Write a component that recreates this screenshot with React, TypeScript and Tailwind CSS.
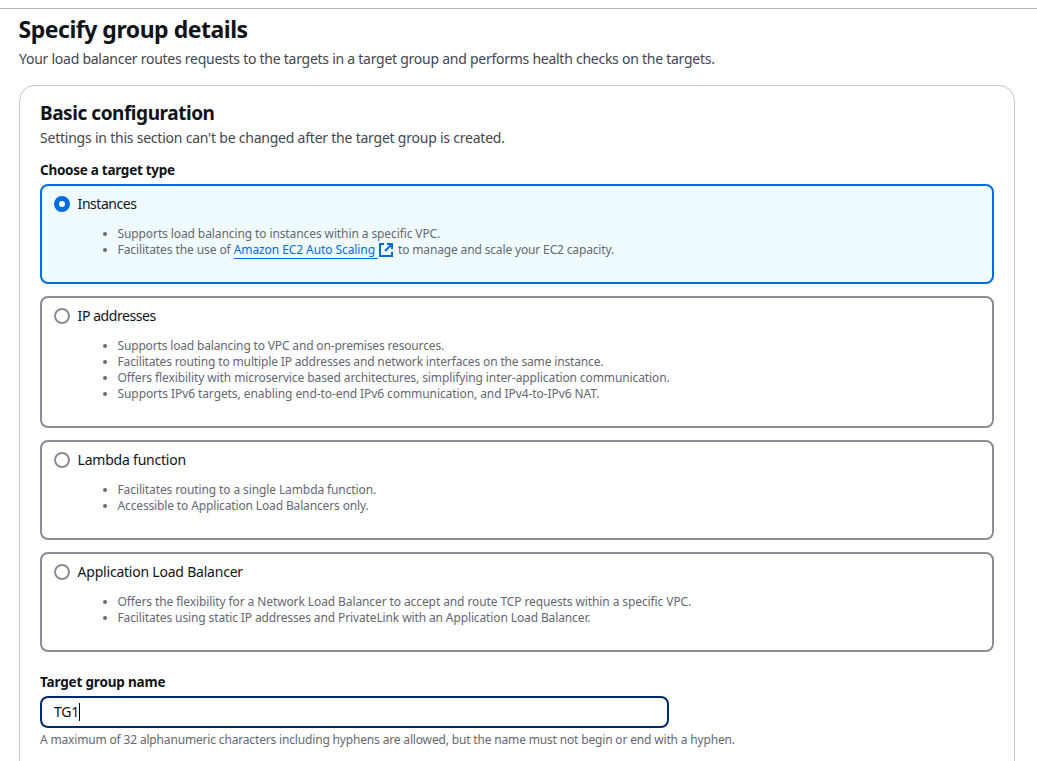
import React from "react";

function Radio({ checked }: { checked?: boolean }) {
  return (
    <span
      className={
        "mt-0.5 h-4 w-4 shrink-0 rounded-full bg-white " +
        (checked ? "border-[5px] border-[#006ce0]" : "border-2 border-[#8c8c94]")
      }
    />
  );
}

type Item = { text: React.ReactNode; tracking: string };

function Tile({
  title,
  items,
  checked,
  titleTracking = "tracking-[-0.22px]",
}: {
  title: string;
  items: Item[];
  checked?: boolean;
  titleTracking?: string;
}) {
  return (
    <div
      className={
        "rounded-lg border-2 pt-2 pb-6 pl-3 " +
        (checked ? "border-[#006ce0] bg-[#f0fbff]" : "border-[#8c8c94] bg-white")
      }
    >
      <div className="flex gap-2">
        <Radio checked={checked} />
        <span className={"-ml-[0.4px] text-sm leading-5 text-[#0f141a] " + titleTracking}>{title}</span>
      </div>
      <ul className="mt-3 list-disc pl-[63.5px] text-xs leading-4 text-[#656871]">
        {items.map((item, i) => (
          <li key={i} className={"h-4 whitespace-nowrap " + item.tracking}>
            {item.text}
          </li>
        ))}
      </ul>
    </div>
  );
}

const ExternalIcon = () => (
  <svg className="inline-block h-4 w-4 align-[-4px]" viewBox="0 0 16 16" fill="none" stroke="#006ce0" strokeWidth="2">
    <path d="M6 2H2v12h12v-4M9 2h5v5M14 2 7 9" />
  </svg>
);

export default function App() {
  return (
    <div className="h-[761px] overflow-hidden bg-white pt-2 font-['Noto_Sans',sans-serif] text-[#0f141a]">
      <div className="border-t border-[#b4b4bb] pr-[22px] pl-[19px]">
        <h1 className="-ml-[0.5px] pt-[5px] text-[23px] leading-[30px] font-bold tracking-[-0.48px]">Specify group details</h1>
        <p className="mt-[5px] text-sm leading-5 tracking-[-0.257px] text-[#424650]">
          Your load balancer routes requests to the targets in a target group and performs health checks on the targets.
        </p>
        <section className="mt-4 h-[720px] rounded-2xl border border-[#c6c6cd] px-5 pt-[15px]">
          <h2 className="text-[19px] leading-6 font-bold tracking-[-0.45px]">Basic configuration</h2>
          <p className="mt-[3px] text-sm leading-5 tracking-[-0.223px] text-[#424650]">
            Settings in this section can't be changed after the target group is created.
          </p>
          <div className="mt-3 text-[13.5px] leading-5 font-bold tracking-[-0.27px]">Choose a target type</div>
          <div className="mt-1 flex flex-col gap-3">
            <Tile
              checked
              title="Instances"
              titleTracking="tracking-[-0.45px]"
              items={[
                { text: "Supports load balancing to instances within a specific VPC.", tracking: "tracking-[-0.1px]" },
                {
                  text: (
                    <>
                      Facilitates the use of{" "}
                      <a className="text-[#006ce0]">
                        <span className="border-b border-[#006ce0] pr-[3px] tracking-[-0.08px]">Amazon EC2 Auto Scaling</span>
                        <ExternalIcon />
                      </a>{" "}
                      <span className="ml-px tracking-[-0.15px]">to manage and scale your EC2 capacity.</span>
                    </>
                  ),
                  tracking: "tracking-[-0.09px]",
                },
              ]}
            />
            <Tile
              title="IP addresses"
              titleTracking="tracking-[-0.43px]"
              items={[
                { text: "Supports load balancing to VPC and on-premises resources.", tracking: "tracking-[-0.16px]" },
                {
                  text: "Facilitates routing to multiple IP addresses and network interfaces on the same instance.",
                  tracking: "tracking-[-0.15px]",
                },
                {
                  text: "Offers flexibility with microservice based architectures, simplifying inter-application communication.",
                  tracking: "tracking-[-0.1px]",
                },
                {
                  text: "Supports IPv6 targets, enabling end-to-end IPv6 communication, and IPv4-to-IPv6 NAT.",
                  tracking: "tracking-[-0.08px]",
                },
              ]}
            />
            <Tile
              title="Lambda function"
              items={[
                { text: "Facilitates routing to a single Lambda function.", tracking: "tracking-[-0.11px]" },
                { text: "Accessible to Application Load Balancers only.", tracking: "tracking-[-0.14px]" },
              ]}
            />
            <Tile
              title="Application Load Balancer"
              items={[
                {
                  text: "Offers the flexibility for a Network Load Balancer to accept and route TCP requests within a specific VPC.",
                  tracking: "tracking-[-0.1px]",
                },
                {
                  text: "Facilitates using static IP addresses and PrivateLink with an Application Load Balancer.",
                  tracking: "tracking-[-0.12px]",
                },
              ]}
            />
          </div>
          <div className="mt-5 text-[13.5px] leading-5 font-bold tracking-[-0.17px]">Target group name</div>
          <div className="mt-1 flex h-8 w-[629px] items-center rounded-lg border-2 border-[#002b66] pl-3 text-sm leading-5 tracking-[-0.2px]">
            TG1
            <span className="h-[18px] w-px bg-black" />
          </div>
          <div className="mt-1 text-xs leading-4 tracking-[-0.165px] text-[#656871]">
            A maximum of 32 alphanumeric characters including hyphens are allowed, but the name must not begin or end with a hyphen.
          </div>
        </section>
      </div>
    </div>
  );
}
